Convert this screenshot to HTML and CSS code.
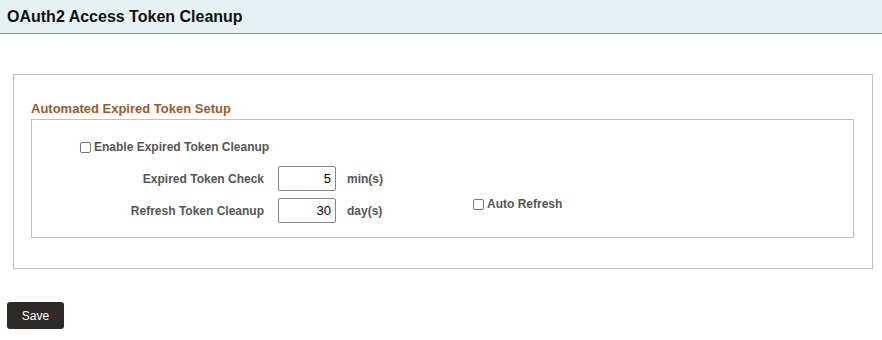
FILE: index.html
```html
<!DOCTYPE html>
<html lang="en">
<head>
  <meta charset="UTF-8">
  <title>OAuth2 Access Token Cleanup</title>
  <link rel="stylesheet" href="styles.css">
</head>
<body>
  <div class="page-header">
    <h2>OAuth2 Access Token Cleanup</h2>
  </div>

  <div class="panel">
    <div class="section-title">Automated Expired Token Setup</div>
    <div class="section-box">
      <label class="check enable-row"><input type="checkbox" id="enableCleanup">Enable Expired Token Cleanup</label>

      <div class="form-grid">
        <span class="field-label">Expired Token Check</span>
        <input type="text" class="num" id="expiredCheck" value="5">
        <span class="unit">min(s)</span>
        <span></span>

        <span class="field-label">Refresh Token Cleanup</span>
        <input type="text" class="num" id="refreshCleanup" value="30">
        <span class="unit">day(s)</span>
        <label class="check auto-refresh"><input type="checkbox" id="autoRefresh">Auto Refresh</label>
      </div>
    </div>
  </div>

  <button class="save-btn">Save</button>
</body>
</html>
```

FILE: styles.css
```css
html, body {
  margin: 0;
  padding: 0;
  font-family: "Liberation Sans", Arial, sans-serif;
  background: #fff;
  color: #555;
}

.page-header {
  height: 33px;
  background: #e6f1f4;
  border-bottom: 1px solid #8c8c8c;
  display: flex;
  align-items: center;
  padding-left: 7px;
}

.page-header h2 {
  margin: 0;
  font-size: 16px;
  font-weight: bold;
  color: #111;
}

.panel {
  margin: 40px 9px 0 13px;
  border: 1px solid #c3bfb9;
  padding: 26px 18px 30px 17px;
}

.section-title {
  font-size: 13px;
  font-weight: bold;
  color: #9c5a2c;
  margin-bottom: 3px;
}

.section-box {
  border: 1px solid #c3bfb9;
  padding: 20px 0 14px 0;
}

.check {
  display: flex;
  align-items: center;
  font-size: 12px;
  font-weight: bold;
  color: #555;
}

.check input {
  appearance: none;
  width: 11px;
  height: 11px;
  margin: 0 3px 0 0;
  border: 1px solid #777;
  border-radius: 2px;
  background: #fff;
}

.check input:checked {
  background: #0075ff;
  border-color: #0075ff;
}

.enable-row {
  margin-left: 48px;
}

.form-grid {
  display: grid;
  grid-template-columns: 246px 58px 137px auto;
  row-gap: 7px;
  align-items: center;
  margin-top: 12px;
}

.field-label {
  font-size: 12px;
  font-weight: bold;
  text-align: right;
  padding-right: 14px;
}

.num {
  box-sizing: border-box;
  width: 58px;
  height: 25px;
  border: 1px solid #8a8580;
  border-radius: 2px;
  text-align: right;
  padding: 0 4px 0 0;
  font-family: "Liberation Sans", Arial, sans-serif;
  font-size: 13px;
  color: #000;
}

.unit {
  font-size: 12px;
  font-weight: bold;
  padding-left: 11px;
}

.auto-refresh {
  align-self: start;
  margin-top: -1px;
}

.save-btn {
  margin: 33px 0 0 7px;
  width: 57px;
  height: 27px;
  border: none;
  border-radius: 3px;
  background: #2e2a27;
  color: #fff;
  font-family: "Liberation Sans", Arial, sans-serif;
  font-size: 12px;
  cursor: pointer;
}
```
